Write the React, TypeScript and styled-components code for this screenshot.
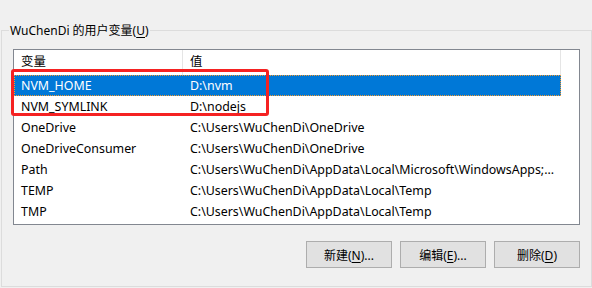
import React from 'react';
import styled, { createGlobalStyle } from 'styled-components';

interface IVar {
  name: string;
  value: string;
}

const vars: IVar[] = [
  { name: 'NVM_HOME', value: 'D:\\nvm' },
  { name: 'NVM_SYMLINK', value: 'D:\\nodejs' },
  { name: 'OneDrive', value: 'C:\\Users\\WuChenDi\\OneDrive' },
  { name: 'OneDriveConsumer', value: 'C:\\Users\\WuChenDi\\OneDrive' },
  { name: 'Path', value: 'C:\\Users\\WuChenDi\\AppData\\Local\\Microsoft\\WindowsApps;...' },
  { name: 'TEMP', value: 'C:\\Users\\WuChenDi\\AppData\\Local\\Temp' },
  { name: 'TMP', value: 'C:\\Users\\WuChenDi\\AppData\\Local\\Temp' },
];

const GlobalStyle = createGlobalStyle`
  html, body {
    margin: 0;
    padding: 0;
    background: #f0f0f0;
  }
  body {
    font-family: "Noto Sans", "Noto Sans CJK SC", sans-serif;
    font-size: 12px;
    color: #000;
    width: 592px;
    height: 288px;
    overflow: hidden;
  }
`;

export default function App() {
  return (
    <>
      <GlobalStyle />
      <Group>
        <Legend>
          WuChenDi 的用户变量(<u>U</u>)
        </Legend>
        <ListBox>
          <Header>
            <HeadCell>变量</HeadCell>
            <HeadCell>值</HeadCell>
          </Header>
          {vars.map((v, i) => (
            <Row key={v.name} selected={i === 0}>
              <Cell>{v.name}</Cell>
              <Cell>{v.value}</Cell>
            </Row>
          ))}
          <Highlight />
        </ListBox>
        <Buttons>
          <Button>
            新建(<u>N</u>)...
          </Button>
          <Button>
            编辑(<u>E</u>)...
          </Button>
          <Button>
            删除(<u>D</u>)
          </Button>
        </Buttons>
      </Group>
    </>
  );
}

const Group = styled.div`
  box-sizing: border-box;
  margin: 30px 0 0 1px;
  width: 591px;
  height: 257px;
  border: 1px solid #dcdcdc;
  padding: 0 11px 0 11px;
`;

const Legend = styled.div`
  margin: -9px 0 0 -4px;
  padding: 0 1px;
  width: fit-content;
  height: 17px;
  line-height: 17px;
  background: #f0f0f0;
  white-space: nowrap;

  u {
    text-decoration-thickness: 1px;
    text-underline-offset: 2px;
  }
`;

const ListBox = styled.div`
  position: relative;
  box-sizing: border-box;
  margin-top: 10px;
  width: 567px;
  height: 176px;
  border: 1px solid #828790;
  background: #fff;
  font-size: 12.4px;
`;

const Header = styled.div`
  display: grid;
  grid-template-columns: 169px 378px;
  height: 25px;
`;

const HeadCell = styled.div`
  box-sizing: border-box;
  padding-left: 7px;
  border-right: 1px solid #e5e5e5;
  line-height: 24px;
`;

const Row = styled.div<{ selected?: boolean }>`
  display: grid;
  grid-template-columns: 169px 378px;
  width: 547px;
  height: 21px;
  box-sizing: border-box;
  background: ${(p) => (p.selected ? '#0078d7' : 'transparent')};
  color: ${(p) => (p.selected ? '#fff' : '#000')};
  border: 1px dotted ${(p) => (p.selected ? '#f39a2f' : 'transparent')};
`;

const Cell = styled.div`
  padding-left: 6px;
  line-height: 19px;
  white-space: nowrap;
  overflow: hidden;
`;

const Highlight = styled.div`
  position: absolute;
  left: -3px;
  top: 19px;
  width: 258px;
  height: 47px;
  box-sizing: border-box;
  border: 3px solid #f52222;
  border-radius: 3px;
  pointer-events: none;
`;

const Buttons = styled.div`
  display: flex;
  justify-content: flex-end;
  gap: 8px;
  margin-top: 16px;
  width: 567px;
`;

const Button = styled.button`
  box-sizing: border-box;
  width: 86px;
  height: 27px;
  padding: 0;
  border: 1px solid #adadad;
  background: #e1e1e1;
  font-family: inherit;
  font-size: 12px;
  color: #000;

  u {
    text-underline-offset: 2px;
  }
`;
